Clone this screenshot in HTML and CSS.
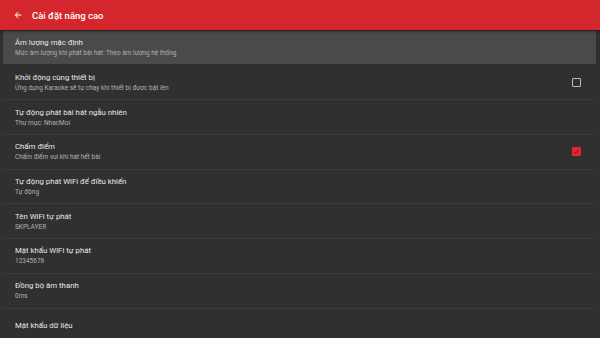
FILE: index.html
```html
<!DOCTYPE html>
<html lang="vi">
<head>
    <meta charset="UTF-8">
    <meta name="viewport" content="width=device-width, initial-scale=1.0">
    <title>Cài đặt nâng cao</title>
    <link rel="stylesheet" href="styles.css">
</head>
<body>
    <header class="toolbar">
        <svg class="back" width="10" height="10" viewBox="0 0 24 24"><path d="M20 11H7.83l5.59-5.59L12 4l-8 8 8 8 1.41-1.41L7.83 13H20v-2z" fill="#fff"/></svg>
        <span class="toolbar-title">Cài đặt nâng cao</span>
    </header>
    <div class="settings">
        <div class="item selected">
            <div class="text">
                <div class="title">Âm lượng mặc định</div>
                <div class="summary">Mức âm lượng khi phát bài hát: Theo âm lượng hệ thống</div>
            </div>
        </div>
        <div class="item">
            <div class="text">
                <div class="title">Khởi động cùng thiết bị</div>
                <div class="summary">Ứng dụng Karaoke sẽ tự chạy khi thiết bị được bật lên</div>
            </div>
            <span class="check"></span>
        </div>
        <div class="item">
            <div class="text">
                <div class="title">Tự động phát bài hát ngẫu nhiên</div>
                <div class="summary">Thư mục: NhacMoi</div>
            </div>
        </div>
        <div class="item">
            <div class="text">
                <div class="title">Chấm điểm</div>
                <div class="summary">Chấm điểm vui khi hát hết bài</div>
            </div>
            <span class="check on">
                <svg width="7" height="7" viewBox="0 0 24 24"><path d="M9 16.2L4.8 12l-1.4 1.4L9 19 21 7l-1.4-1.4L9 16.2z" fill="#3a1010"/></svg>
            </span>
        </div>
        <div class="item">
            <div class="text">
                <div class="title">Tự động phát WiFi để điều khiển</div>
                <div class="summary">Tự động</div>
            </div>
        </div>
        <div class="item">
            <div class="text">
                <div class="title">Tên WiFi tự phát</div>
                <div class="summary">SKPLAYER</div>
            </div>
        </div>
        <div class="item">
            <div class="text">
                <div class="title">Mật khẩu WiFi tự phát</div>
                <div class="summary">12345678</div>
            </div>
        </div>
        <div class="item">
            <div class="text">
                <div class="title">Đồng bộ âm thanh</div>
                <div class="summary">0ms</div>
            </div>
        </div>
        <div class="item">
            <div class="text">
                <div class="title">Mật khẩu dữ liệu</div>
            </div>
        </div>
    </div>
</body>
</html>
```

FILE: styles.css
```css
body {
    margin: 0;
    background-color: #303030;
    font-family: Roboto, "Noto Sans", sans-serif;
    color: #fff;
    overflow: hidden;
    height: 338px;
}
.toolbar {
    height: 30px;
    background-color: #d3272d;
    display: flex;
    align-items: center;
    padding-left: 13px;
    box-shadow: 0 1px 3px rgba(0, 0, 0, 0.5);
    position: relative;
}
.back {
    margin-right: 9px;
}
.toolbar-title {
    font-size: 9.5px;
    font-weight: 500;
}
.settings {
    padding: 1px 4px 0 3px;
}
.item {
    display: flex;
    align-items: center;
    padding: 0 15px 0 12px;
    border-bottom: 1px solid #3a3a3a;
    box-sizing: border-box;
    height: 34.7px;
}
.item.selected {
    background-color: #4a4a4a;
    height: 33px;
    border-bottom: none;
    margin-bottom: 1.7px;
}
.text {
    flex: 1;
}
.title {
    font-size: 7.8px;
    line-height: 11px;
    color: #e8e8e8;
}
.summary {
    font-size: 6.5px;
    line-height: 10px;
    color: #b0b0b0;
}
.check {
    width: 7px;
    height: 7px;
    border: 1.5px solid #bdbdbd;
    border-radius: 1px;
    display: flex;
    align-items: center;
    justify-content: center;
}
.check.on {
    border-color: #e5262d;
    background-color: #e5262d;
}
```
